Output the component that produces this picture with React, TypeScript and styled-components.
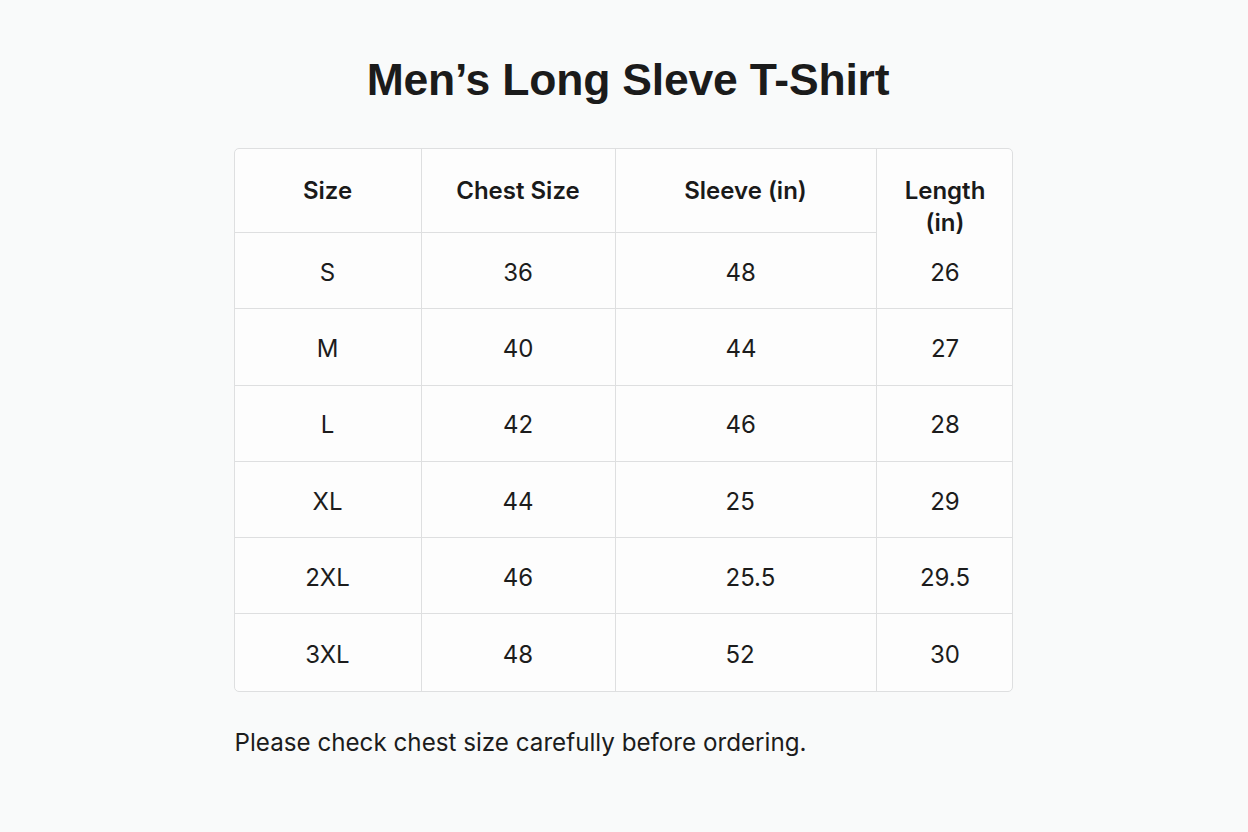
import styled, { createGlobalStyle } from 'styled-components';

const GlobalStyle = createGlobalStyle`
    html, body {
        margin: 0;
        padding: 0;
        background: #f9fafa;
    }

    body {
        font-family: 'Liberation Sans', Arial, sans-serif;
        color: #1c1c1c;
    }
`;

interface Row {
    size: string;
    chest: string;
    sleeve: string;
    length: string;
}

const rows: Row[] = [
    { size: 'S', chest: '36', sleeve: '48', length: '26' },
    { size: 'M', chest: '40', sleeve: '44', length: '27' },
    { size: 'L', chest: '42', sleeve: '46', length: '28' },
    { size: 'XL', chest: '44', sleeve: '25', length: '29' },
    { size: '2XL', chest: '46', sleeve: '25.5', length: '29.5' },
    { size: '3XL', chest: '48', sleeve: '52', length: '30' },
];

export default function App() {
    return (
        <>
            <GlobalStyle />
            <Page>
                <Title>Men’s Long Sleve T-Shirt</Title>

                <TableFrame>
                    <SizeTable>
                        <colgroup>
                            <col style={{ width: 187 }} />
                            <col style={{ width: 194 }} />
                            <col style={{ width: 261 }} />
                            <col style={{ width: 137 }} />
                        </colgroup>
                        <thead>
                            <tr>
                                <HeadCell>Size</HeadCell>
                                <HeadCell>Chest Size</HeadCell>
                                <HeadCell>Sleeve (in)</HeadCell>
                                <HeadCell $open $last>
                                    <HeadLabel>Length<br />(in)</HeadLabel>
                                </HeadCell>
                            </tr>
                        </thead>
                        <tbody>
                            {rows.map((row, i) => (
                                <tr key={row.size}>
                                    <Cell $bottom={i < rows.length - 1}>{row.size}</Cell>
                                    <Cell $bottom={i < rows.length - 1}>{row.chest}</Cell>
                                    <Cell $bottom={i < rows.length - 1} $left>{row.sleeve}</Cell>
                                    <Cell $bottom={i < rows.length - 1} $last>{row.length}</Cell>
                                </tr>
                            ))}
                        </tbody>
                    </SizeTable>
                </TableFrame>

                <Note>Please check chest size carefully before ordering.</Note>
            </Page>
        </>
    );
}

const Page = styled.main`
    width: 779px;
    margin: 0 auto;
    display: flex;
    flex-direction: column;
    align-items: stretch;
    transform: translateX(-1px);
`;

const Title = styled.h1`
    margin: 56px 0 44px;
    padding-left: 10px;
    height: 48px;
    line-height: 48px;
    text-align: center;
    font-family: 'Liberation Sans', Arial, sans-serif;
    font-size: 44.5px;
    font-weight: 700;
    letter-spacing: -0.2px;
    color: #1b1b1b;
`;

const TableFrame = styled.div`
    border: 1px solid #dedfe0;
    border-radius: 5px;
    background: #fdfdfd;
    overflow: hidden;
`;

const SizeTable = styled.table`
    width: 100%;
    border-collapse: separate;
    border-spacing: 0;
    table-layout: fixed;
`;

const HeadCell = styled.th<{ $open?: boolean; $last?: boolean }>`
    height: 84px;
    padding: 26px 0 0;
    vertical-align: top;
    text-align: center;
    font-family: Inter, 'Liberation Sans', sans-serif;
    font-size: 24px;
    font-weight: 600;
    line-height: 32px;
    color: #1a1a1a;
    border-right: ${({ $last }) => ($last ? 'none' : '1px solid #dedfe0')};
    border-bottom: ${({ $open }) => ($open ? 'none' : '1px solid #dedfe0')};
    box-sizing: border-box;
`;

const HeadLabel = styled.div`
    height: 32px;
    overflow: visible;
`;

const Cell = styled.td<{ $bottom?: boolean; $last?: boolean; $left?: boolean }>`
    height: 76.3px;
    box-sizing: border-box;
    padding: 3px 0 0;
    padding-left: ${({ $left }) => ($left ? '110px' : '0')};
    text-align: ${({ $left }) => ($left ? 'left' : 'center')};
    vertical-align: middle;
    font-family: Inter, 'Liberation Sans', sans-serif;
    font-size: 24px;
    font-weight: 400;
    color: #1c1c1c;
    border-right: ${({ $last }) => ($last ? 'none' : '1px solid #dedfe0')};
    border-bottom: ${({ $bottom }) => ($bottom ? '1px solid #dedfe0' : 'none')};
`;

const Note = styled.p`
    margin: 37px 0 0 1px;
    font-family: Inter, 'Liberation Sans', sans-serif;
    font-size: 24.2px;
    line-height: 28px;
    color: #1c1c1c;
`;
